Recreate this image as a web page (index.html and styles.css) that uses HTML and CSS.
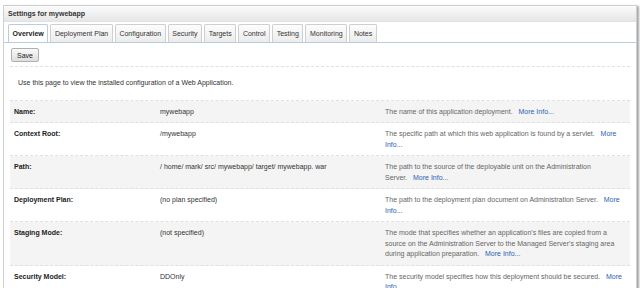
FILE: index.html
```html
<!DOCTYPE html>
<html lang="en">
<head>
    <meta charset="UTF-8">
    <title>Settings for mywebapp</title>
    <link rel="stylesheet" href="styles.css">
</head>
<body>
    <div class="panel">
        <div class="title">Settings for mywebapp</div>
        <div class="tabs">
            <div class="tab active">Overview</div>
            <div class="tab">Deployment Plan</div>
            <div class="tab">Configuration</div>
            <div class="tab">Security</div>
            <div class="tab">Targets</div>
            <div class="tab">Control</div>
            <div class="tab">Testing</div>
            <div class="tab">Monitoring</div>
            <div class="tab">Notes</div>
        </div>
        <div class="content">
            <div class="toolbar">
                <button class="save">Save</button>
            </div>
            <div class="intro">Use this page to view the installed configuration of a Web Application.</div>

            <!-- Eigenschaften -->
            <div class="props">
                <div class="row">
                    <div class="label">Name:</div>
                    <div class="value">mywebapp</div>
                    <div class="desc">The name of this application deployment.&nbsp;&nbsp;&nbsp;<a href="#">More Info...</a></div>
                </div>
                <div class="row">
                    <div class="label">Context Root:</div>
                    <div class="value">/mywebapp</div>
                    <div class="desc">The specific path at which this web application is found by a servlet.&nbsp;&nbsp;&nbsp;<a href="#">More Info...</a></div>
                </div>
                <div class="row">
                    <div class="label">Path:</div>
                    <div class="value">/ home/ mark/ src/ mywebapp/ target/ mywebapp. war</div>
                    <div class="desc">The path to the source of the deployable unit on the Administration Server.&nbsp;&nbsp;&nbsp;<a href="#">More Info...</a></div>
                </div>
                <div class="row">
                    <div class="label">Deployment Plan:</div>
                    <div class="value">(no plan specified)</div>
                    <div class="desc">The path to the deployment plan document on Administration Server.&nbsp;&nbsp;&nbsp;<a href="#">More Info...</a></div>
                </div>
                <div class="row">
                    <div class="label">Staging Mode:</div>
                    <div class="value">(not specified)</div>
                    <div class="desc">The mode that specifies whether an application's files are copied from a source on the Administration Server to the Managed Server's staging area during application preparation.&nbsp;&nbsp;&nbsp;<a href="#">More Info...</a></div>
                </div>
                <div class="row">
                    <div class="label">Security Model:</div>
                    <div class="value">DDOnly</div>
                    <div class="desc">The security model specifies how this deployment should be secured.&nbsp;&nbsp;&nbsp;<a href="#">More Info...</a></div>
                </div>
            </div>
        </div>
    </div>
</body>
</html>
```

FILE: styles.css
```css
body {
    font-family: 'Liberation Sans', Arial, sans-serif;
    font-size: 7px;
    color: #333;
    background: white;
    margin: 0;
    padding: 5px 3px 0 3px;
    overflow: hidden;
}
.panel {
    width: 632px;
    border: 1px solid #cfcfcf;
    box-shadow: 2px 1px 2px rgba(0, 0, 0, 0.35);
    background: white;
}
.title {
    height: 15px;
    line-height: 15px;
    padding-left: 4px;
    font-weight: bold;
    color: #333;
    background: linear-gradient(#fbfbfb, #e6e6e6);
    border-bottom: 1px solid #e2e2e2;
}
.tabs {
    display: flex;
    gap: 2px;
    padding: 2px 4px 0 4px;
    border-bottom: 1px solid #b8cde0;
}
.tab {
    height: 17px;
    line-height: 17px;
    padding: 0 3.6px;
    border: 1px solid #cfcfcf;
    border-bottom: none;
    border-radius: 2px 2px 0 0;
    background: linear-gradient(#fdfdfd, #ececec);
    color: #333;
}
.tab.active {
    font-weight: bold;
    color: #222;
    background: white;
    border-color: #b8cde0;
}
.content {
    padding: 0 6px;
}
.toolbar {
    padding: 5px 1px 4px 1px;
    border-bottom: 1px dashed #e0e0e0;
}
.save {
    font-family: inherit;
    font-size: 7px;
    height: 14px;
    padding: 0 5px;
    border: 1px solid #b0b0b0;
    border-radius: 2px;
    background: linear-gradient(#fafafa, #dedede);
    color: #222;
}
.intro {
    padding: 11px 8px 11px 8px;
    line-height: 10.5px;
    color: #333;
    border-bottom: 1px dashed #e0e0e0;
}
.row {
    display: grid;
    grid-template-columns: 146px 225px 1fr;
    border-bottom: 1px dashed #e0e0e0;
}
.row:nth-child(odd) {
    background: #f4f4f4;
}
.label, .value, .desc {
    padding: 6px 4px 5px 4px;
    line-height: 10.5px;
}
.label {
    font-weight: bold;
    color: #222;
}
.value {
    color: #333;
}
.desc {
    color: #666;
    padding-right: 5px;
}
.desc a {
    color: #2c5fb3;
    text-decoration: none;
}
```
